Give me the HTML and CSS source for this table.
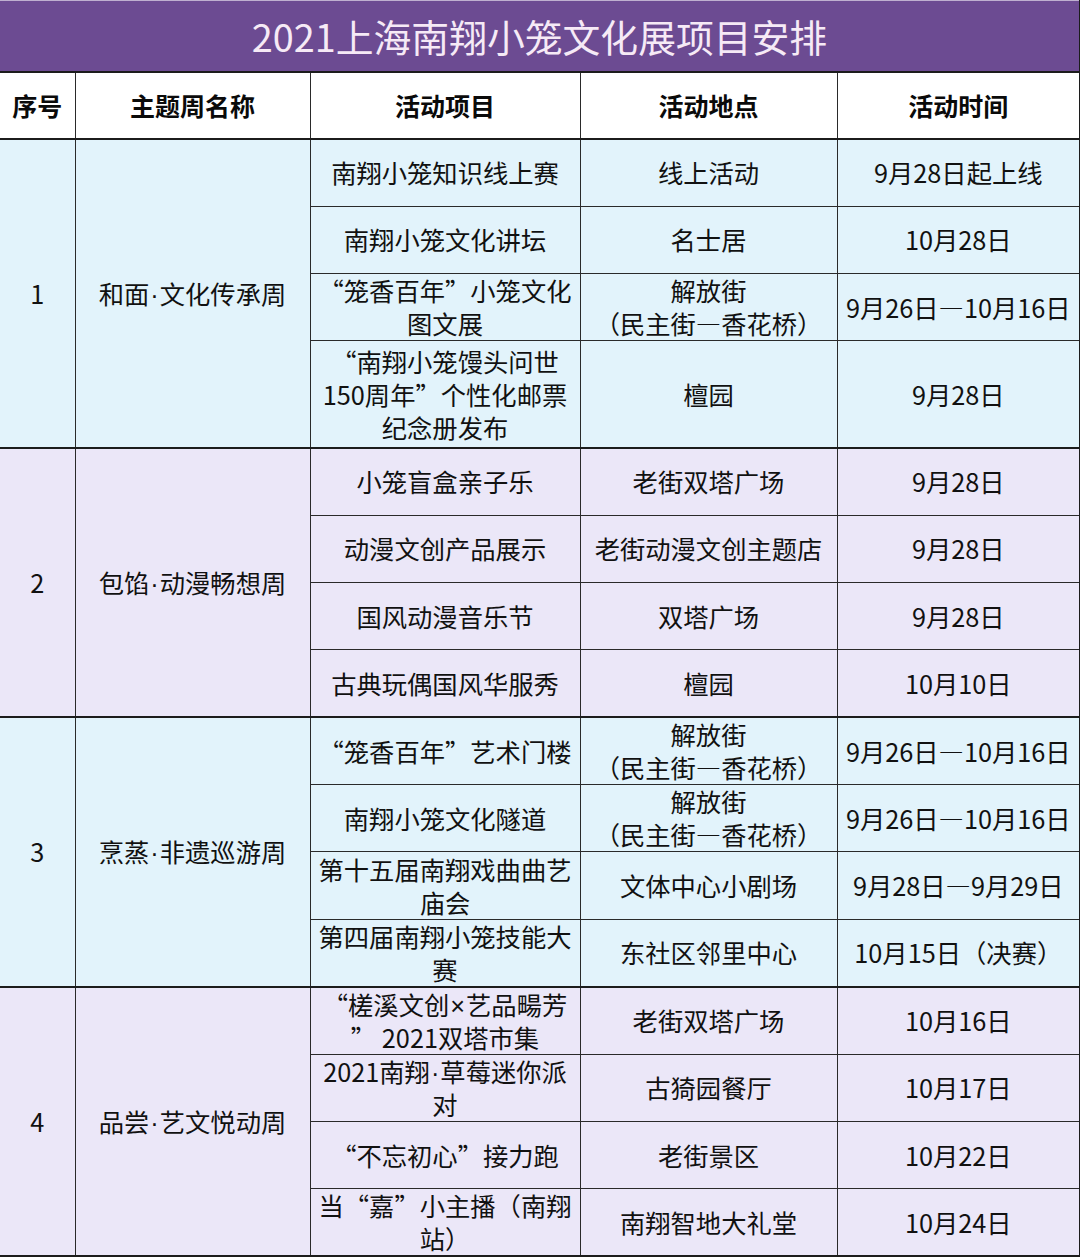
FILE: index.html
```html
<!DOCTYPE html>
<html lang="zh-CN">
<head>
<meta charset="utf-8">
<title>2021上海南翔小笼文化展项目安排</title>
<link rel="stylesheet" href="styles.css">
</head>
<body>
<table class="sched">
  <colgroup>
    <col class="c-no">
    <col class="c-week">
    <col class="c-item">
    <col class="c-place">
    <col class="c-time">
  </colgroup>
  <thead>
    <tr class="title-row"><th colspan="5" class="title">2021上海南翔小笼文化展项目安排</th></tr>
    <tr class="head-row">
      <th>序号</th>
      <th>主题周名称</th>
      <th>活动项目</th>
      <th>活动地点</th>
      <th>活动时间</th>
    </tr>
  </thead>
  <tbody class="grp blue">
    <tr>
      <td rowspan="4">1</td>
      <td rowspan="4">和面<span class="dot">·</span>文化传承周</td>
      <td>南翔小笼知识线上赛</td>
      <td>线上活动</td>
      <td class="time">9月28日起上线</td>
    </tr>
    <tr><td>南翔小笼文化讲坛</td><td>名士居</td><td class="time">10月28日</td></tr>
    <tr><td>“笼香百年”小笼文化<br>图文展</td><td>解放街<br>（民主街—香花桥）</td><td class="time">9月26日—10月16日</td></tr>
    <tr class="tall"><td>“南翔小笼馒头问世<br>150周年”个性化邮票<br>纪念册发布</td><td>檀园</td><td class="time">9月28日</td></tr>
  </tbody>
  <tbody class="grp lav">
    <tr>
      <td rowspan="4">2</td>
      <td rowspan="4">包馅<span class="dot">·</span>动漫畅想周</td>
      <td>小笼盲盒亲子乐</td>
      <td>老街双塔广场</td>
      <td class="time">9月28日</td>
    </tr>
    <tr><td>动漫文创产品展示</td><td>老街动漫文创主题店</td><td class="time">9月28日</td></tr>
    <tr><td>国风动漫音乐节</td><td>双塔广场</td><td class="time">9月28日</td></tr>
    <tr><td>古典玩偶国风华服秀</td><td>檀园</td><td class="time">10月10日</td></tr>
  </tbody>
  <tbody class="grp blue">
    <tr>
      <td rowspan="4">3</td>
      <td rowspan="4">烹蒸<span class="dot">·</span>非遗巡游周</td>
      <td>“笼香百年”艺术门楼</td>
      <td>解放街<br>（民主街—香花桥）</td>
      <td class="time">9月26日—10月16日</td>
    </tr>
    <tr><td>南翔小笼文化隧道</td><td>解放街<br>（民主街—香花桥）</td><td class="time">9月26日—10月16日</td></tr>
    <tr><td>第十五届南翔戏曲曲艺<br>庙会</td><td>文体中心小剧场</td><td class="time">9月28日—9月29日</td></tr>
    <tr><td>第四届南翔小笼技能大<br>赛</td><td>东社区邻里中心</td><td class="time">10月15日（决赛）</td></tr>
  </tbody>
  <tbody class="grp lav">
    <tr>
      <td rowspan="4">4</td>
      <td rowspan="4">品尝<span class="dot">·</span>艺文悦动周</td>
      <td>“槎溪文创<span class="dot">×</span>艺品畼芳<br>” 2021双塔市集</td>
      <td>老街双塔广场</td>
      <td class="time">10月16日</td>
    </tr>
    <tr><td>2021南翔<span class="dot">·</span>草莓迷你派<br>对</td><td>古猗园餐厅</td><td class="time">10月17日</td></tr>
    <tr><td>“不忘初心”接力跑</td><td>老街景区</td><td class="time">10月22日</td></tr>
    <tr><td>当“嘉”小主播（南翔<br>站）</td><td>南翔智地大礼堂</td><td class="time">10月24日</td></tr>
  </tbody>
</table>
</body>
</html>
```
FILE: styles.css
```css
html, body {
  margin: 0;
  padding: 0;
  background: #ffffff;
}

body {
  font-family: "Noto Sans CJK SC", "Noto Sans", sans-serif;
  color: #111111;
}

.sched {
  width: 1080px;
  table-layout: fixed;
  border-collapse: collapse;
  border-right: 2px solid #1c1c1c;
  border-bottom: 2px solid #1c1c1c;
}

.c-no { width: 75px; }
.c-week { width: 235px; }
.c-item { width: 270px; }
.c-place { width: 257px; }
.c-time { width: 243px; }

.sched th,
.sched td {
  border: 1px solid #2a2a2a;
  text-align: center;
  vertical-align: middle;
  padding: 0 3px;
  font-size: 25.3px;
  line-height: 33px;
}

.sched tr > :first-child {
  border-left: none;
}

.dot {
  font-family: "Liberation Sans", Arial, sans-serif;
  line-height: 0;
  padding: 0 1px;
}

.title-row th.title {
  height: 70px;
  background: #6c4b92;
  color: #f6eaf6;
  font-weight: normal;
  font-size: 37.8px;
  line-height: 40px;
  border-top: 1px solid #bfb0d0;
  border-bottom: 2px solid #1c1c1c;
  border-left: none;
  border-right: none;
}

.head-row th {
  height: 65px;
  background: #ffffff;
  font-weight: bold;
  font-size: 25px;
  color: #0a0a0a;
}

.grp {
  border-top: 2px solid #1c1c1c;
}

.grp tr {
  height: 67.3px;
}

.grp tr.tall {
  height: 107px;
}

.blue td { background: #e2f3fb; }
.lav td { background: #ebe7f8; }

.sched td.time {
  white-space: nowrap;
  padding: 0;
}
```
